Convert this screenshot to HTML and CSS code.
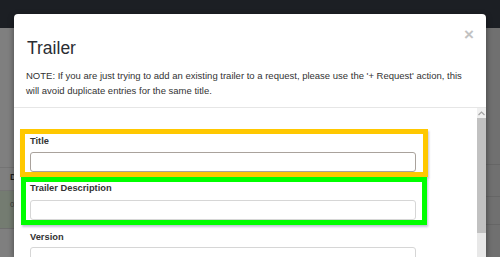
FILE: index.html
```html
<!DOCTYPE html>
<html lang="en">
  <head>
    <meta charset="UTF-8" />
    <title>Trailer</title>
    <link rel="stylesheet" href="styles.css">
  </head>
  <body>
    <div class="navbar"></div>
    <div class="page">
      <div class="main">
        <div class="spacer"></div>
        <div class="row head-row">DISPLAY</div>
        <div class="row done-row">0%</div>
      </div>
      <div class="side">
        <div class="side-row r1"></div>
        <div class="side-row r2"></div>
        <div class="side-row r3"></div>
      </div>
    </div>

    <div class="modal">
      <div class="modal-header">
        <div class="header-text">
          <h4 class="modal-title">Trailer</h4>
          <p class="note">NOTE: If you are just trying to add an existing trailer to a request, please use the '+ Request' action, this will avoid duplicate entries for the same title.</p>
        </div>
        <span class="close">&times;</span>
      </div>
      <div class="modal-body">
        <div class="form">
          <div class="form-group hl-yellow">
            <label for="title">Title</label>
            <input type="text" id="title" class="field focused" />
          </div>
          <div class="form-group hl-green">
            <label for="desc">Trailer Description</label>
            <input type="text" id="desc" class="field" />
          </div>
          <div class="form-group plain">
            <label for="version">Version</label>
            <input type="text" id="version" class="field" />
          </div>
        </div>
        <div class="scrollbar">
          <div class="arrow">
            <svg width="7" height="5" viewBox="0 0 7 5"><path d="M0.5 4 L3.5 1 L6.5 4" fill="none" stroke="#a3a3a3" stroke-width="1.2"/></svg>
          </div>
          <div class="thumb"></div>
          <div class="track"></div>
        </div>
      </div>
    </div>
  </body>
</html>
```

FILE: styles.css
```css
html, body {
  margin: 0;
  height: 100%;
  overflow: hidden;
}
body {
  background: #7f7f7f;
  font-family: "Liberation Sans", Arial, sans-serif;
  color: #333;
}

.navbar {
  height: 28px;
  background: #1c1f24;
}

.page {
  display: flex;
  height: 229px;
}
.main {
  flex: 1;
}
.spacer {
  height: 139px;
}
.row {
  border-top: 1px solid #747474;
  padding-left: 10px;
  font-size: 9px;
}
.head-row {
  height: 22px;
  line-height: 18px;
  font-weight: bold;
  color: #1d1d1d;
}
.done-row {
  height: 37px;
  line-height: 28px;
  background: #747c71;
  border-bottom: 1px solid #6e6e6e;
  font-size: 8px;
  color: #3c3c3c;
}
.side {
  width: 20px;
  background: #707070;
}
.side-row {
  border-bottom: 1px solid #666;
}
.r1 { height: 136px; }
.r2 { height: 31px; }
.r3 { height: 27px; }

.modal {
  position: absolute;
  left: 14px;
  top: 14px;
  width: 472px;
  height: 243px;
  background: #fff;
  border-radius: 4px 4px 0 0;
  box-shadow: 0 2px 6px rgba(0, 0, 0, 0.45);
  display: flex;
  flex-direction: column;
  overflow: hidden;
}

.modal-header {
  display: flex;
  padding: 25px 12px 9px 12px;
  border-bottom: 1px solid #e6e6e6;
}
.header-text {
  flex: 1;
}
.modal-title {
  margin: 0 0 10px 1px;
  font-size: 17.5px;
  font-weight: normal;
  line-height: 19px;
  color: #2a2d33;
}
.note {
  margin: 0;
  font-size: 9.5px;
  line-height: 15px;
  color: #333;
}
.close {
  margin-top: -14px;
  font-size: 17px;
  font-weight: bold;
  line-height: 20px;
  color: #c2c2c2;
}

.modal-body {
  flex: 1;
  display: flex;
  min-height: 0;
}
.form {
  flex: 1;
  padding: 21px 0 0 6px;
}
.form-group {
  display: flex;
  flex-direction: column;
  align-items: flex-start;
}
.form-group label {
  font-size: 9.3px;
  font-weight: bold;
  line-height: 13px;
  color: #333;
}
.field {
  box-sizing: border-box;
  width: 386px;
  height: 20px;
  margin: 0;
  padding: 0 4px;
  border: 1px solid #d6d6d6;
  border-radius: 3px;
  background: #fff;
}
.field.focused {
  border-color: #a9a29c;
}

.hl-yellow {
  width: 393px;
  border: 5px solid #ffc800;
  padding: 1px 0 0 5px;
  box-shadow: 1px 2px 2px rgba(90, 80, 140, 0.35);
}
.hl-yellow label {
  margin-bottom: 4px;
}
.hl-green {
  width: 392px;
  margin-left: 1px;
  border: 5px solid #00ff00;
  padding: 0 0 0 4px;
  box-shadow: 1px 2px 2px rgba(90, 80, 140, 0.35);
}
.hl-green label {
  margin-bottom: 5px;
}
.plain {
  padding: 6px 0 0 10px;
}
.plain label {
  margin-bottom: 3px;
}

.scrollbar {
  width: 9px;
  display: flex;
  flex-direction: column;
  background: #f0f0f0;
}
.arrow {
  height: 10px;
  display: flex;
  align-items: center;
  justify-content: center;
}
.thumb {
  height: 115px;
  background: #c1c1c1;
}
.track {
  flex: 1;
  background: #e8e8e8;
}
```
